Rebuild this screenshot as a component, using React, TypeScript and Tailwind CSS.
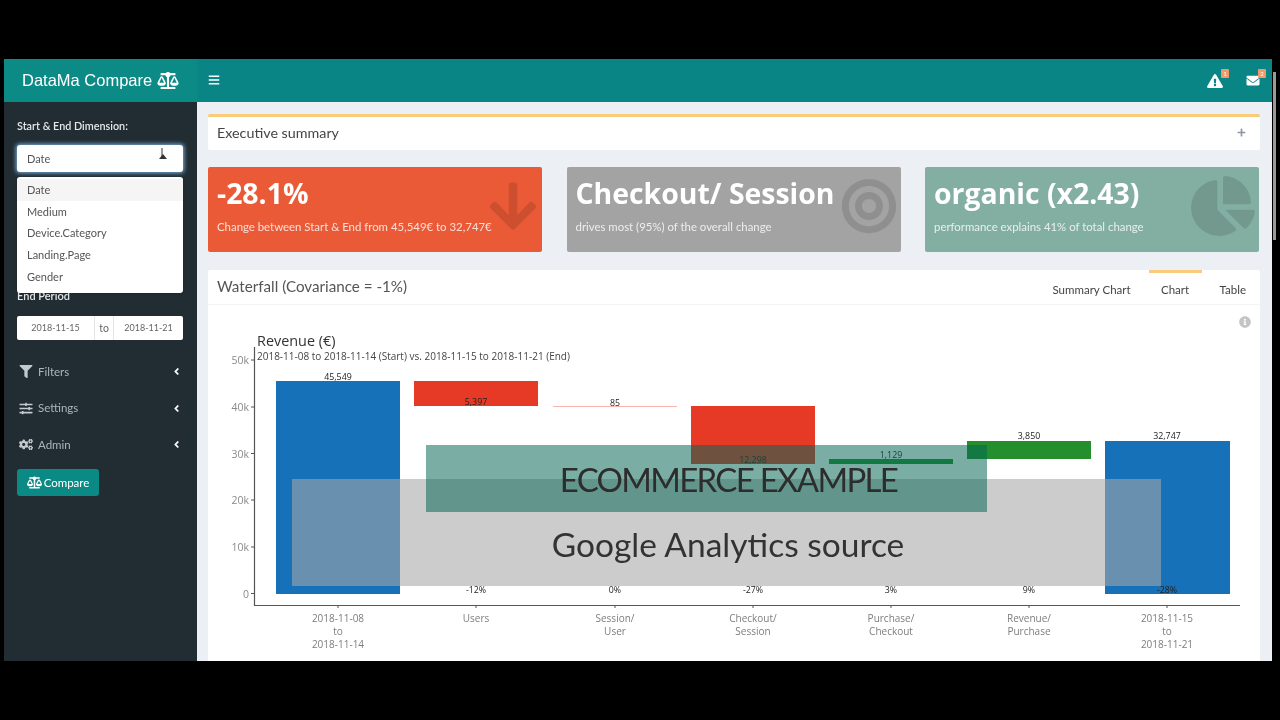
import {
  FaAngleLeft,
  FaArrowDown,
  FaBalanceScale,
  FaBars,
  FaBullseye,
  FaChartPie,
  FaCogs,
  FaEnvelope,
  FaExclamationTriangle,
  FaFilter,
  FaInfoCircle,
  FaPlus,
  FaSlidersH,
} from 'react-icons/fa'

const options = ['Date', 'Medium', 'Device.Category', 'Landing.Page', 'Gender']

const menu = [
  { icon: FaFilter, label: 'Filters' },
  { icon: FaSlidersH, label: 'Settings' },
  { icon: FaCogs, label: 'Admin' },
]

const yTicks = [
  { label: '50k', y: 360 },
  { label: '40k', y: 407 },
  { label: '30k', y: 453.5 },
  { label: '20k', y: 500 },
  { label: '10k', y: 547 },
  { label: '0', y: 593.5 },
]

const bars = [
  { x: 276, y: 381, w: 124, h: 213, fill: '#1771b9' },
  { x: 414, y: 381, w: 124, h: 25, fill: '#e63a27' },
  { x: 553, y: 406, w: 124, h: 1, fill: '#f6b5ae' },
  { x: 691, y: 406, w: 124, h: 58, fill: '#e63a27' },
  { x: 829, y: 459, w: 124, h: 5, fill: '#258f2d' },
  { x: 967, y: 441, w: 124, h: 18, fill: '#258f2d' },
  { x: 1105, y: 441, w: 125, h: 153, fill: '#1771b9' },
]

const columns = [
  { x: 338, value: '45,549', valueY: 380, lines: ['2018-11-08', 'to', '2018-11-14'] },
  { x: 476, value: '5,397', valueY: 405, pct: '-12%', lines: ['Users'] },
  { x: 615, value: '85', valueY: 406, pct: '0%', lines: ['Session/', 'User'] },
  { x: 753, value: '12,298', valueY: 463, pct: '-27%', lines: ['Checkout/', 'Session'] },
  { x: 891, value: '1,129', valueY: 458, pct: '3%', lines: ['Purchase/', 'Checkout'] },
  { x: 1029, value: '3,850', valueY: 439, pct: '9%', lines: ['Revenue/', 'Purchase'] },
  { x: 1167, value: '32,747', valueY: 439, pct: '-28%', lines: ['2018-11-15', 'to', '2018-11-21'] },
]

function WaterfallChart() {
  return (
    <svg viewBox="208 305 1052 356" className="block w-[1052px] h-[356px] font-['Open_Sans',sans-serif]">
      {bars.map((bar) => (
        <rect key={bar.x} x={bar.x} y={bar.y} width={bar.w} height={bar.h} fill={bar.fill} />
      ))}
      <path d="M254.5 347V605.5H1240" fill="none" stroke="#555" strokeWidth="1.2" />
      {yTicks.map((tick) => (
        <g key={tick.label}>
          <line x1="251" x2="254" y1={tick.y} y2={tick.y} stroke="#555" />
          <text x="249" y={tick.y + 4} textAnchor="end" fontSize="10.5" fill="#8a8a8a">
            {tick.label}
          </text>
        </g>
      ))}
      {columns.map((col) => (
        <g key={col.x}>
          <line x1={col.x} x2={col.x} y1="605" y2="608" stroke="#555" />
          <text x={col.x} y={col.valueY} textAnchor="middle" fontSize="8.8" fill="#222">
            {col.value}
          </text>
          {col.pct && (
            <text x={col.x} y="593" textAnchor="middle" fontSize="8.8" fill="#222">
              {col.pct}
            </text>
          )}
          {col.lines.map((line, i) => (
            <text key={line} x={col.x} y={622 + i * 13} textAnchor="middle" fontSize="10" fill="#7d7d7d">
              {line}
            </text>
          ))}
        </g>
      ))}
      <text x="257" y="346" fontSize="14.4" fill="#333">
        Revenue (€)
      </text>
      <text x="257" y="360" fontSize="10" fill="#444">
        2018-11-08 to 2018-11-14 (Start) vs. 2018-11-15 to 2018-11-21 (End)
      </text>
    </svg>
  )
}

function Sidebar() {
  return (
    <aside className="w-[193px] shrink-0 bg-[#212d33] pl-[13px] pr-[14px] pt-[17px]">
      <div className="text-[10.8px] leading-[14px] font-semibold text-[#e4e8ea]">Start &amp; End Dimension:</div>
      <div className="relative mt-[12px]">
        <div className="h-[27px] rounded-[3px] bg-white pl-[10px] text-[11px] leading-[27px] text-[#555] shadow-[0_0_4px_1px_#7fb4e0]">
          Date
        </div>
        {/* cursor over the caret */}
        <svg viewBox="0 0 12 20" className="absolute right-[14px] top-[2px] w-[12px] h-[20px]">
          <path d="M5 1V10" stroke="#333" strokeWidth="1" />
          <path d="M6 7L10 12H2Z" fill="#333" />
        </svg>
        <div className="absolute left-0 top-[32px] z-10 w-full h-[116px] rounded-[3px] bg-white py-[2px] text-[11px] text-[#555] shadow">
          {options.map((option, i) => (
            <div key={option} className={`h-[21.7px] pl-[10px] leading-[21.7px] ${i === 0 ? 'bg-[#f5f5f5]' : ''}`}>
              {option}
            </div>
          ))}
        </div>
      </div>
      <div className="mt-[117px] text-[11px] leading-[14px] font-semibold text-[#e4e8ea]">End Period</div>
      <div className="mt-[13px] flex h-[24px] items-center rounded-[2px] bg-white text-[9px] text-[#666]">
        <span className="w-[77px] text-center">2018-11-15</span>
        <span className="w-[20px] border-x border-[#e5e5e5] text-center text-[10.5px] leading-[24px]">to</span>
        <span className="flex-1 text-center">2018-11-21</span>
      </div>
      <nav className="mt-[13px]">
        {menu.map(({ icon: Icon, label }) => (
          <div key={label} className="flex h-[36.7px] items-center text-[11.5px] text-[#a9b6bc]">
            <Icon className="ml-[2px] w-[14px] h-[13px] text-[#c2cace]" />
            <span className="ml-[5px] flex-1">{label}</span>
            <FaAngleLeft className="mr-[1px] w-[11px] h-[11px] text-white" />
          </div>
        ))}
      </nav>
      <button className="mt-[6px] flex h-[27px] w-[82px] items-center justify-center gap-[2px] rounded-[3px] bg-[#0b8a85] text-[11.5px] text-white">
        <FaBalanceScale className="w-[15px] h-[13px]" />
        Compare
      </button>
    </aside>
  )
}

function ValueCard({
  color,
  title,
  text,
  icon: Icon,
  iconClass,
}: {
  color: string
  title: string
  text: string
  icon: typeof FaFilter
  iconClass: string
}) {
  return (
    <div className={`relative h-[85px] rounded-[2px] px-[9px] pt-[7px] text-white ${color}`}>
      <div className="font-['Open_Sans',sans-serif] text-[28.4px] leading-[38px] font-bold whitespace-nowrap">{title}</div>
      <div className="mt-[7px] text-[11.4px] leading-[16px] text-white/80 whitespace-nowrap">{text}</div>
      <Icon className={`absolute text-black/[0.12] ${iconClass}`} />
    </div>
  )
}

export default function App() {
  return (
    <div className="h-[720px] overflow-hidden bg-black pl-[4px] py-[59px] font-['Lato','Noto_Sans',sans-serif] blur-[0.4px]">
      <div className="relative flex h-[602px] w-[1268px] flex-col overflow-hidden">
        <header className="flex h-[43px] shrink-0 items-center bg-[#0a8585] text-white">
          <div className="flex h-full w-[193px] items-center bg-[#0c8b86] pl-[18px] font-['Liberation_Sans',sans-serif] text-[16.5px]">
            DataMa Compare
            <FaBalanceScale className="ml-[5px] w-[22px] h-[17px]" />
          </div>
          <FaBars className="ml-[11px] -mt-[1px] w-[12px] h-[12px]" />
          <div className="ml-auto mr-[12px] flex items-center gap-[23px]">
            <div className="relative">
              <FaExclamationTriangle className="w-[16px] h-[14px]" />
              <span className="absolute -right-[6px] -top-[5px] h-[9px] w-[8px] rounded-[1px] bg-[#f09a6c] text-center text-[6px] leading-[9px]">
                1
              </span>
            </div>
            <div className="relative">
              <FaEnvelope className="w-[14px] h-[13px]" />
              <span className="absolute -right-[6px] -top-[5px] h-[9px] w-[8px] rounded-[1px] bg-[#f09a6c] text-center text-[6px] leading-[9px]">
                2
              </span>
            </div>
          </div>
        </header>
        <div className="flex min-h-0 flex-1">
          <Sidebar />
          <main className="min-w-0 flex-1 bg-[#ecf0f5] px-[11px] pt-[12px]">
            <div className="flex h-[36px] w-[1052px] items-center justify-between rounded-[2px] border-t-[3px] border-[#f8cc7b] bg-white pl-[9px] pr-[14px] pb-[2px]">
              <span className="text-[14.3px] text-[#444]">Executive summary</span>
              <FaPlus className="w-[9px] h-[9px] text-[#8f95a8]" />
            </div>
            <div className="mt-[17px] grid w-[1052px] grid-cols-[334px_334px_334px] gap-x-[24.5px]">
              <ValueCard
                color="bg-[#ea5a36]"
                title="-28.1%"
                text="Change between Start & End from 45,549€ to 32,747€"
                icon={FaArrowDown}
                iconClass="left-[279px] top-[12px] w-[52px] h-[54px]"
              />
              <ValueCard
                color="bg-[#a3a3a3]"
                title="Checkout/ Session"
                text="drives most (95%) of the overall change"
                icon={FaBullseye}
                iconClass="left-[274px] top-[11px] w-[56px] h-[56px]"
              />
              <ValueCard
                color="bg-[#83afa3]"
                title="organic (x2.43)"
                text="performance explains 41% of total change"
                icon={FaChartPie}
                iconClass="left-[266px] top-[9px] w-[64px] h-[60px]"
              />
            </div>
            <section className="relative mt-[18px] w-[1052px] rounded-t-[2px] bg-white">
              <div className="flex h-[35px] items-center justify-between border-b border-[#f4f4f4] pb-[2px] pl-[9px] pr-[14px]">
                <span className="text-[15.2px] text-[#555]">Waterfall (Covariance = -1%)</span>
                <div className="-mb-[2px] flex h-full text-[11.5px] text-[#444]">
                  <span className="mr-[18px] pt-[10px]">Summary Chart</span>
                  <span className="w-[53px] -mt-[1px] border-t-[3px] border-[#f8cc7b] pt-[8px] text-center">Chart</span>
                  <span className="ml-[18px] pt-[10px]">Table</span>
                </div>
              </div>
              <WaterfallChart />
              <FaInfoCircle className="absolute left-[1031px] top-[46px] w-[12px] h-[12px] text-[#c4c4c4]" />
              <div className="absolute left-[84px] top-[209px] flex h-[107px] w-[869px] items-center justify-center bg-[rgba(167,167,167,0.58)] pl-[3px] text-[33.5px] text-[#333]">
                <span className="relative top-[12px]">Google Analytics source</span>
              </div>
              <div className="absolute left-[218px] top-[175px] flex h-[67px] w-[561px] items-center justify-center bg-[rgba(4,102,85,0.53)] pl-[44px] text-[33px] tracking-[-1.7px] text-[#2d2d2d]">
                <span className="relative top-[1px]">ECOMMERCE EXAMPLE</span>
              </div>
            </section>
          </main>
        </div>
      </div>
      <div className="absolute left-[1273px] top-[72px] h-[168px] w-[3px] bg-[#9a9a9a]" />
    </div>
  )
}
